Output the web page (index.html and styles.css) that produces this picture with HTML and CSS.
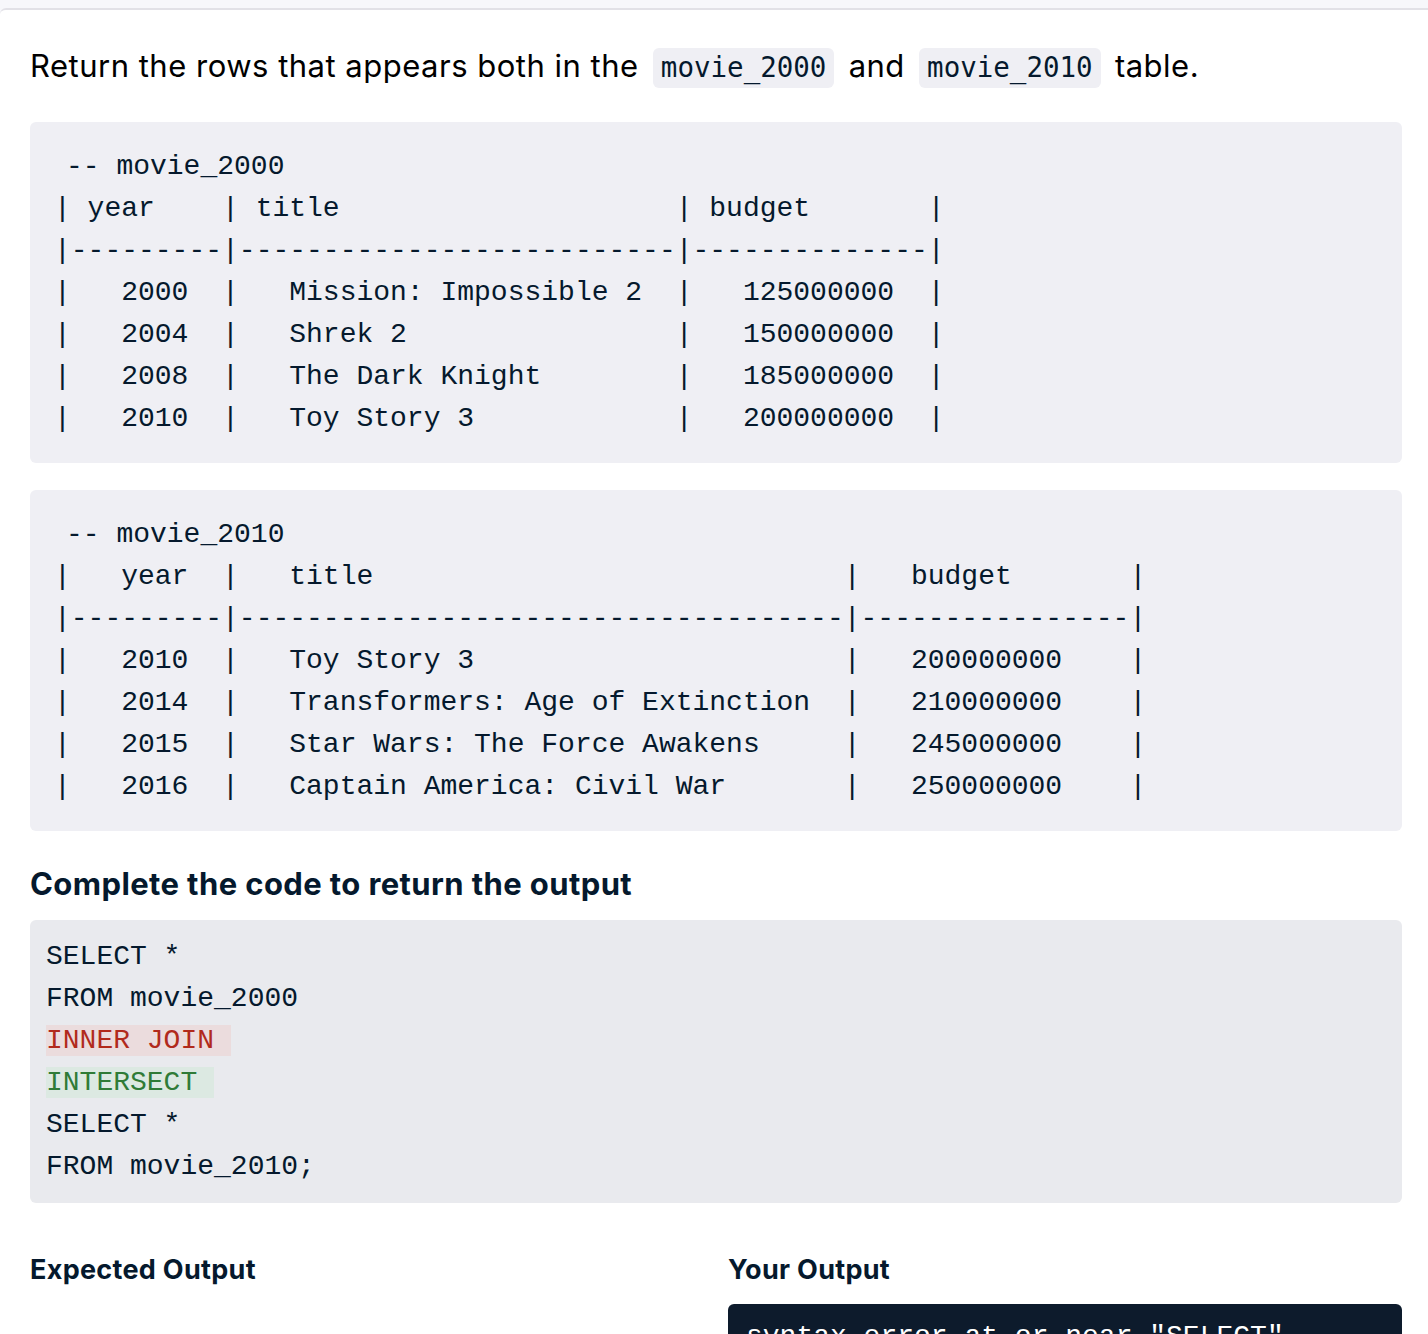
FILE: index.html
```html
<!DOCTYPE html>
<html lang="en">
<head>
<meta charset="utf-8">
<title>Exercise</title>
<link rel="stylesheet" href="styles.css">
</head>
<body>
<div class="topbar"></div>
<main class="panel">
  <p class="prompt">Return the rows that appears both in the <code class="inline">movie_2000</code> and <code class="inline">movie_2010</code> table.</p>

  <pre class="table-block"><span class="cmt">-- movie_2000</span>
| year    | title                    | budget       |
|---------|--------------------------|--------------|
|   2000  |   Mission: Impossible 2  |   125000000  |
|   2004  |   Shrek 2                |   150000000  |
|   2008  |   The Dark Knight        |   185000000  |
|   2010  |   Toy Story 3            |   200000000  |</pre>

  <pre class="table-block"><span class="cmt">-- movie_2010</span>
|   year  |   title                            |   budget       |
|---------|------------------------------------|----------------|
|   2010  |   Toy Story 3                      |   200000000    |
|   2014  |   Transformers: Age of Extinction  |   210000000    |
|   2015  |   Star Wars: The Force Awakens     |   245000000    |
|   2016  |   Captain America: Civil War       |   250000000    |</pre>

  <h2 class="section-title">Complete the code to return the output</h2>

  <pre class="code-block">SELECT *
FROM movie_2000
<span class="del">INNER JOIN </span>
<span class="ins">INTERSECT </span>
SELECT *
FROM movie_2010;</pre>

  <div class="outputs">
    <section class="output-col">
      <h3 class="output-title">Expected Output</h3>
    </section>
    <section class="output-col">
      <h3 class="output-title">Your Output</h3>
      <pre class="console">syntax error at or near "SELECT"</pre>
    </section>
  </div>
</main>
</body>
</html>
```

FILE: styles.css
```css
* {
  box-sizing: border-box;
}

html, body {
  margin: 0;
  padding: 0;
}

body {
  background: #f7f7fb;
  font-family: "Inter", "Liberation Sans", sans-serif;
  color: #05192d;
  height: 1334px;
  overflow: hidden;
}

.topbar {
  height: 8px;
  background: #f7f7fb;
}

.panel {
  background: #ffffff;
  border-top: 2px solid #e2e1e7;
  border-radius: 6px 0 0 0;
  padding: 0 26px 40px 30px;
  min-height: 1326px;
}

.prompt {
  margin: 0;
  padding-top: 33px;
  font-size: 31px;
  line-height: 45px;
  color: #000000;
  letter-spacing: 0.5px;
}

code.inline {
  font-family: "DejaVu Sans Mono", "Liberation Mono", monospace;
  font-size: 27.5px;
  background: #efeff4;
  border-radius: 6px;
  padding: 3px 8px 5px 8px;
  margin: 0 5px;
  color: #05192d;
  letter-spacing: 0;
}

.table-block,
.code-block,
.console {
  font-family: "Liberation Mono", "DejaVu Sans Mono", monospace;
  font-size: 28px;
  line-height: 42px;
  margin: 0;
  white-space: pre;
  overflow: hidden;
}

.table-block {
  background: #efeff4;
  border-radius: 6px;
  padding: 24px 24px 23px 24px;
  color: #05192d;
  margin-top: 32px;
}

.table-block + .table-block {
  margin-top: 27px;
}

.cmt {
  display: inline-block;
  margin-left: 12px;
}

.section-title {
  margin: 33px 0 0 0;
  font-size: 31px;
  line-height: 39px;
  font-weight: 700;
  color: #05192d;
  letter-spacing: 0.4px;
}

.code-block {
  margin-top: 17px;
  background: #e9eaee;
  border-radius: 6px;
  padding: 16px 16px 15px 16px;
  color: #05192d;
}

.del {
  color: #b12a1c;
  background: #ebdcdd;
}

.ins {
  color: #2f7b37;
  background: #dce9e2;
}

.outputs {
  display: grid;
  grid-template-columns: 1fr 1fr;
  column-gap: 24px;
  margin-top: 49px;
}

.output-title {
  margin: 0;
  font-size: 27px;
  line-height: 36px;
  font-weight: 700;
  color: #05192d;
  letter-spacing: 0.3px;
}

.console {
  margin-top: 16px;
  background: #0d1b2c;
  color: #ffffff;
  border-radius: 6px;
  padding: 12px 18px;
  min-height: 120px;
}
```
